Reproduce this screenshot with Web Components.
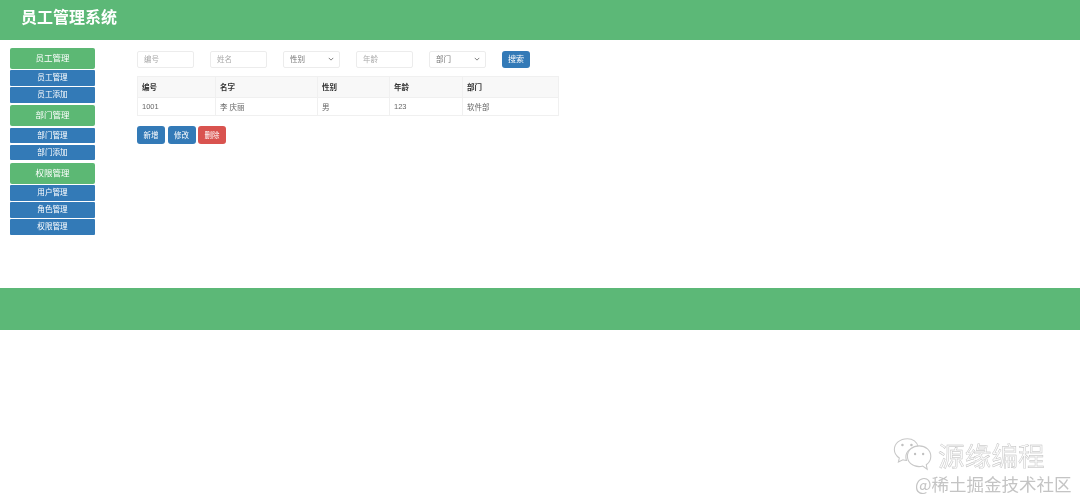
<!DOCTYPE html>
<html>
<head>
<meta charset="utf-8">
<title>员工管理系统</title>
<style>
  html, body { margin: 0; padding: 0; background: #fff; }
  body { height: 502px; overflow: hidden; font-family: "Liberation Sans", "Noto Sans CJK SC", sans-serif; color: #333; }
</style>
</head>
<body>
<emp-app></emp-app>

<script>
const FONT = `"Liberation Sans", "Noto Sans CJK SC", sans-serif`;
const ARROW = `url("data:image/svg+xml,%3Csvg xmlns='http://www.w3.org/2000/svg' viewBox='0 0 8 5'%3E%3Cpath d='M1 1l3 3 3-3' fill='none' stroke='%23666' stroke-width='1.1'/%3E%3C/svg%3E")`;

customElements.define('side-menu', class extends HTMLElement {
  constructor() {
    super();
    this.attachShadow({ mode: 'open' });
    const groups = [
      ['员工管理', ['员工管理', '员工添加']],
      ['部门管理', ['部门管理', '部门添加']],
      ['权限管理', ['用户管理', '角色管理', '权限管理']]
    ];
    this.shadowRoot.innerHTML = `
      <style>
        :host { display: block; width: 85px; }
        .group { display: flex; flex-direction: column; gap: 1.4px; margin-bottom: 2.4px; }
        .head, .item { display: block; text-align: center; color: #fff; box-sizing: border-box; }
        .head { height: 21px; line-height: 21px; font-size: 8.5px; background: #5cb874; border-radius: 2px; }
        .item { height: 15.6px; line-height: 15.6px; font-size: 7.6px; background: #337ab7; border-radius: 1px; }
      </style>
      ${groups.map(([title, items]) => `
        <div class="group">
          <span class="head">${title}</span>
          ${items.map(i => `<span class="item">${i}</span>`).join('')}
        </div>`).join('')}`;
  }
});

customElements.define('search-bar', class extends HTMLElement {
  constructor() {
    super();
    this.attachShadow({ mode: 'open' });
    this.shadowRoot.innerHTML = `
      <style>
        :host { display: flex; gap: 16.5px; align-items: center; }
        input, select {
          width: 56.5px; height: 17.5px; box-sizing: border-box; margin: 0;
          padding: 0 6px; font: 7.5px ${FONT}; color: #777; background: #fff;
          border: 1px solid #ececec; border-radius: 2px; outline: none;
        }
        input::placeholder { color: #aaa; opacity: 1; }
        select {
          appearance: none; -webkit-appearance: none;
          background: #fff ${ARROW} no-repeat right 5px center / 6px 4px;
        }
        button {
          width: 28px; height: 17.5px; padding: 0 0 1px; font: 8px ${FONT}; color: #fff;
          background: #337ab7; border: 0; border-radius: 3px;
        }
      </style>
      <input placeholder="编号">
      <input placeholder="姓名">
      <select><option>性别</option></select>
      <input placeholder="年龄">
      <select><option>部门</option></select>
      <button>搜索</button>`;
  }
});

customElements.define('emp-table', class extends HTMLElement {
  constructor() {
    super();
    this.attachShadow({ mode: 'open' });
    const heads = ['编号', '名字', '性别', '年龄', '部门'];
    const row = ['1001', '李 庆丽', '男', '123', '软件部'];
    this.shadowRoot.innerHTML = `
      <style>
        :host { display: block; width: 422px; font-size: 7.5px; color: #666; }
        table { width: 100%; border-collapse: collapse; table-layout: fixed; }
        th, td { border: 1px solid #f0f0f0; padding: 0 4px 1px; text-align: left; box-sizing: border-box; }
        th { height: 21px; background: #f8f8f8; font-weight: bold; color: #333; }
        td { height: 18px; }
      </style>
      <table>
        <colgroup><col style="width:78px"><col style="width:102px"><col style="width:72px"><col style="width:73px"><col></colgroup>
        <tr>${heads.map(h => `<th>${h}</th>`).join('')}</tr>
        <tr>${row.map(c => `<td>${c}</td>`).join('')}</tr>
      </table>`;
  }
});

customElements.define('action-bar', class extends HTMLElement {
  constructor() {
    super();
    this.attachShadow({ mode: 'open' });
    this.shadowRoot.innerHTML = `
      <style>
        :host { display: flex; gap: 2.5px; }
        button {
          width: 28px; height: 18px; padding: 0 0 1px; font: 7.5px ${FONT}; color: #fff;
          background: #337ab7; border: 0; border-radius: 3px;
        }
        .danger { background: #d9534f; }
      </style>
      <button>新增</button><button>修改</button><button class="danger">删除</button>`;
  }
});

customElements.define('water-mark', class extends HTMLElement {
  constructor() {
    super();
    this.attachShadow({ mode: 'open' });
    this.shadowRoot.innerHTML = `
      <style>
        :host { position: absolute; left: 888px; top: 435px; width: 192px; height: 67px; color: #fff; }
        .top { display: flex; align-items: center; gap: 4px; height: 38px; }
        svg { width: 46px; height: 36px; flex: none; }
        .name { font: 26.5px "Noto Sans CJK SC", sans-serif; letter-spacing: .2px; color: #fafafa; -webkit-text-stroke: .4px #bbb; }
        .site { font: 17.5px "Noto Sans CJK SC", sans-serif; padding-left: 27px; color: #c4c4c4; white-space: nowrap; line-height: 22px; }
      </style>
      <div class="top">
        <svg viewBox="0 0 46 40" fill="#fff" stroke="#c8c8c8" stroke-width="1.2">
          <path d="M19 3C10.500 3 4.500 8.500 4.500 15c0 4 2 7 5.500 9.500L9 29l5-2.500c1.500.4 2.800.6 4 .6-.5-1.500-.7-2.600-.7-3.800 0-6.500 6-11.300 13.700-11.300C29.500 6.500 25 3 19 3z"/>
          <path d="M32 11c-7.500 0-13 5-13 11.500S24.500 34 32 34c1.500 0 2.800-.2 4-.6l5 3.600-1-5c3-2.200 5-5 5-9.500C45 16 39.500 11 32 11z"/>
          <g fill="#c0c0c0" stroke="none">
            <circle cx="13.500" cy="10" r="1.400"/><circle cx="23.500" cy="10" r="1.400"/>
            <circle cx="27.500" cy="20" r="1.300"/><circle cx="36.500" cy="20" r="1.300"/>
          </g>
        </svg>
        <span class="name">源缘编程</span>
      </div>
      <div class="site">@稀土掘金技术社区</div>`;
  }
});

customElements.define('emp-app', class extends HTMLElement {
  constructor() {
    super();
    this.attachShadow({ mode: 'open' });
    this.shadowRoot.innerHTML = `
      <style>
        :host { display: block; height: 502px; position: relative; filter: blur(.35px); }
        header { height: 39.5px; background: #5cb877; box-sizing: border-box; padding-left: 21px; line-height: 35px; color: #fff; font-size: 16px; font-weight: bold; }
        .body { height: 248.5px; box-sizing: border-box; display: flex; padding: 8.5px 0 0 10px; gap: 42px; }
        .main { display: flex; flex-direction: column; padding-top: 2.5px; }
        emp-table { margin-top: 8px; }
        action-bar { margin-top: 10px; }
        footer { height: 42px; background: #5cb877; }
      </style>
      <header>员工管理系统</header>
      <div class="body">
        <side-menu></side-menu>
        <div class="main">
          <search-bar></search-bar>
          <emp-table></emp-table>
          <action-bar></action-bar>
        </div>
      </div>
      <footer></footer>
      <water-mark></water-mark>`;
  }
});
</script>
</body>
</html>
